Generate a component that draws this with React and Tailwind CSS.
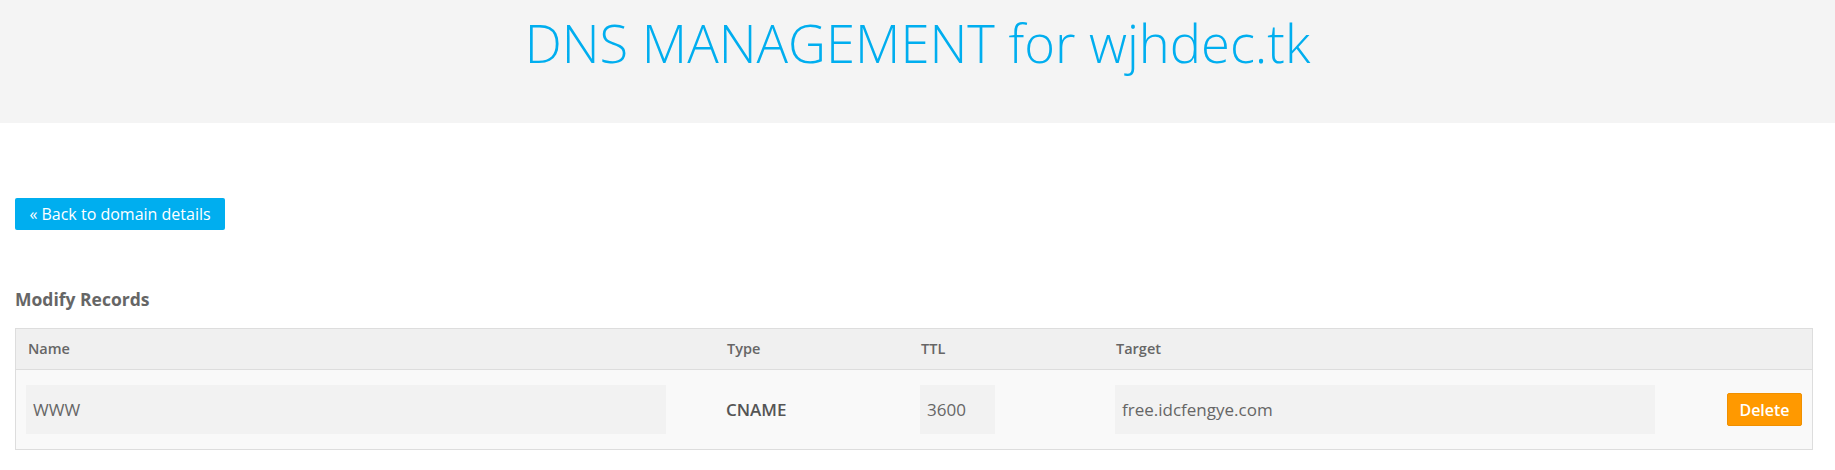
import React from "react";

export default function App() {
  return (
    <div className="w-[1835px] h-[470px] bg-white text-[#666]" style={{ fontFamily: '"Open Sans", "Liberation Sans", sans-serif' }}>
      <div className="h-[123px] bg-[#f4f4f4] flex justify-center">
        <h1 className="mt-[8px] text-[52.5px] leading-[70px] font-light text-[#00aeef]">DNS MANAGEMENT for wjhdec.tk</h1>
      </div>
      <div className="pl-[15px]">
        <div className="pt-[75px]">
          <button className="h-[32px] w-[210px] rounded-[2px] bg-[#00aeef] text-white text-[16px] leading-[32px] text-center">« Back to domain details</button>
        </div>
        <h2 className="mt-[57px] text-[17.5px] font-bold leading-[24px] text-[#666]">Modify Records</h2>
        <div className="mt-[17px] w-[1798px] border border-[#dddddd]">
          <div className="flex h-[41px] items-center bg-[#f0f0f0] border-b border-[#dddddd] text-[14.5px] font-semibold text-[#666]">
            <div className="w-[700px] pl-[12px]">Name</div>
            <div className="w-[194px] pl-[11px]">Type</div>
            <div className="w-[195px] pl-[11px]">TTL</div>
            <div className="pl-[11px]">Target</div>
          </div>
          <div className="flex h-[79px] items-center bg-[#f9f9f9]">
            <div className="w-[700px] pl-[10px]">
              <div className="w-[640px] h-[49px] bg-[#f2f2f2] pl-[7px] flex items-center text-[17px] text-[#666]">WWW</div>
            </div>
            <div className="w-[194px] pl-[10px] text-[17px] font-semibold text-[#555]">CNAME</div>
            <div className="w-[195px] pl-[10px]">
              <div className="w-[75px] h-[49px] bg-[#f2f2f2] pl-[7px] flex items-center text-[17px] text-[#666]">3600</div>
            </div>
            <div className="w-[622px] pl-[10px]">
              <div className="w-[540px] h-[49px] bg-[#f2f2f2] pl-[7px] flex items-center text-[17px] text-[#666]">free.idcfengye.com</div>
            </div>
            <button className="w-[75px] h-[33px] rounded-[2px] bg-[#ff9900] border border-[#f09000] text-white text-[16px] font-semibold">Delete</button>
          </div>
        </div>
      </div>
    </div>
  );
}
